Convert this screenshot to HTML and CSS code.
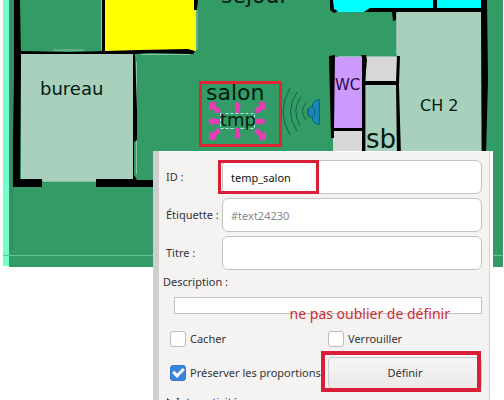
FILE: index.html
```html
<!DOCTYPE html>
<html lang="fr">
<head>
<meta charset="utf-8">
<title>Propriétés de l'objet</title>
<link rel="stylesheet" href="styles.css">
</head>
<body>
<main class="page">
  <svg class="plan" viewBox="0 0 504 267" role="img" aria-label="Plan">
    <rect x="3" width="7" height="266" fill="#73ffc8"/>
    <rect x="9" width="494" height="267" fill="#339b66"/>
    <path d="M3 255.500H503" stroke="#62c893"/>
    <rect x="10" width="4" height="250" fill="#3a8b65"/>
    <!-- rooms -->
    <rect x="105" width="91" height="51" fill="#ff0"/>
    <rect x="21" y="54" width="113" height="127" fill="#a9d0bd"/>
    <path d="M397 12H481V160H366V85H397z" fill="#a9d0bd"/>
    <path d="M333 0H481V9H370L364 12H337L333 9z" fill="#00ffff"/>
    <rect x="333" y="57" width="30" height="71" fill="#cc99ff"/>
    <rect x="366" y="57" width="31" height="25" fill="#d7d7d7"/>
    <rect x="333" y="131" width="30" height="25" fill="#d7d7d7"/>
    <path d="M101.500 0V50M53 50H84M141 54.500H190M136.500 62V174M197 8V50M396.500 13V55M338 56.500H396M43 181.500H96M482.500 12V150" stroke="#8fbfa6" fill="none"/>
    <!-- walls -->
    <path d="M14 0H20L21 60L20 179H42V187H13V135L14 80z"/>
    <path d="M20 51L70 52L140 50L188 49L195 51L193 54L150 53L135 54L137 110V140L134 142V175L137 180H153V187H96V179H133V54L20 54z"/>
    <path d="M102 0H105V51H102zM194 0H198L197 10H194z"/>
    <path d="M330 0H333L334 9L338 11L334 13L330 10zM364 12L370 8H433V0H437V8H481V0H487L488 80L486 155H482L481 12H396V20L393 21L392 12z"/>
    <path d="M329 56L335 55L334 128H362V57L361 55H366L367 60L365 81H396L397 56H400L399 85L401 156H397L396 85H365V156H362V131H334V138H331z"/>
    <g class="plan-text">
      <text class="size-l" x="221" y="3">séjour</text>
      <text class="size-m" x="40" y="95">bureau</text>
      <text class="size-l" x="206" y="100">salon</text>
      <text class="size-s wc" x="335" y="90">WC</text>
      <text class="size-s" x="420" y="111">CH 2</text>
      <text class="size-xl" x="366" y="148">sb</text>
    </g>
    <!-- temperature marker with its selection handles -->
    <rect x="220.500" y="113.500" width="34" height="15" fill="none" stroke="#b5e8ef" stroke-dasharray="3 2"/>
    <text class="plan-text size-m" x="220" y="126">tmp</text>
    <g fill="#e43eb2">
      <path d="M209 102L217 102L215 105L221 110L218 114L212 109L209 111z"/>
      <path d="M266 102L258 102L260 105L254 110L257 114L263 109L266 111z"/>
      <path d="M209 140L217 140L215 137L221 132L218 128L212 133L209 131z"/>
      <path d="M266 140L258 140L260 137L254 132L257 128L263 133L266 131z"/>
      <path d="M237 101L241 106L239.500 107V113H235.500V107L234 106zM237 140L241 135L239.500 134V128H235.500V134L234 135zM208 121L213 117V119H219V124H213V126zM266 121L261 117V119H255V124H261V126z"/>
    </g>
    <rect x="200.500" y="82.500" width="80" height="63" fill="none" stroke="#df2633" stroke-width="3"/>
    <!-- motion sensor -->
    <path d="M290 88Q276 112 290 135M297 92Q284 112 297 131M301 97Q291 109 300 126M306 103Q299 111 306 120" fill="none" stroke="#126441"/>
    <g fill="#1887b5" stroke="#145b82">
      <path d="M319.500 99.500V124.500Q313 124 312 118V107Q313 100 319.500 99.500z"/>
      <ellipse cx="311.500" cy="112" rx="3.500" ry="5"/>
      <path d="M308 108V117"/>
    </g>
  </svg>

  <form class="panel">
    <div class="fields">
      <label for="id">ID :</label>
      <div class="marked marked-id"><input class="field" id="id" type="text" value="temp_salon"></div>
      <label for="tag">Étiquette :</label>
      <input class="field" id="tag" type="text" placeholder="#text24230">
      <label for="title">Titre :</label>
      <input class="field" id="title" type="text">
    </div>
    <label class="desc-label" for="desc">Description :</label>
    <div class="desc-wrap">
      <textarea class="desc" id="desc" rows="1"></textarea>
      <p class="note">ne pas oublier de définir</p>
    </div>
    <div class="options">
      <label class="check"><input type="checkbox">Cacher</label>
      <label class="check"><input type="checkbox">Verrouiller</label>
      <label class="check"><input type="checkbox" checked>Préserver les proportions</label>
      <div class="marked marked-set"><button class="set" type="button">Définir</button></div>
    </div>
    <details class="more"><summary>Interactivité</summary></details>
  </form>
</main>
</body>
</html>
```
FILE: styles.css
```css
*,
*::before,
*::after {
  box-sizing: border-box;
}

body {
  margin: 0;
  background: #fff;
  color: #333338;
  font: 11px/16px "Noto Sans", "Open Sans", sans-serif;
}

.page {
  display: grid;
  align-items: start;
  height: 100vh;
  overflow: hidden;
}

.plan,
.panel {
  grid-area: 1 / 1;
}

.plan {
  display: block;
  width: 100%;
}

.plan-text {
  fill: #031b10;
  font-family: "DejaVu Sans", sans-serif;
}

.size-s { font-size: 16px; }
.size-m { font-size: 18px; }
.size-l { font-size: 22px; }
.size-xl { font-size: 26px; }
.plan-text .wc { fill: #2a0a4a; font-size: 15px; }

.panel {
  position: relative;
  margin: 151px 11px 0 153px;
  padding: 9px 8px 0 4px;
  border-left: 6px solid #d2cdcd;
  border-right: 3px solid #fff;
  background: #f5f3f2;
  box-shadow: inset -1px 0 #d8d2d1, inset 0 1px #fff;
}

.fields {
  display: grid;
  grid-template-columns: 56px 1fr;
  align-items: center;
  gap: 4px 3px;
}

.fields label {
  padding-left: 3px;
  white-space: nowrap;
}

.field {
  display: block;
  width: 100%;
  height: 34px;
  padding: 0 8px;
  border: 1px solid #c3c4bf;
  border-radius: 6px;
  background: #fff;
  color: #111;
  font: inherit;
}

.field::placeholder {
  color: #868686;
  opacity: 1;
}

.marked {
  position: relative;
}

.marked::after {
  position: absolute;
  border: 3px solid #d81f35;
  content: "";
  pointer-events: none;
}

.marked-id::after {
  inset: 0 auto 0 -4px;
  width: 101px;
}

.desc-label {
  display: block;
  margin-top: 4px;
}

.desc-wrap {
  position: relative;
  margin: 7px 0 0 11px;
}

.desc {
  display: block;
  width: 100%;
  height: 17px;
  padding: 0;
  border: 1px solid #c3c4bf;
  background: #fff;
  resize: none;
}

.note {
  position: absolute;
  top: 7px;
  right: 32px;
  margin: 0;
  color: #cf2d35;
  font-size: 14px;
  line-height: 20px;
  white-space: nowrap;
}

.options {
  display: grid;
  grid-template-columns: 151px 1fr;
  align-items: center;
  gap: 10px 7px;
  margin-top: 17px;
  padding-left: 7px;
}

.check {
  display: flex;
  align-items: center;
  gap: 4px;
  white-space: nowrap;
}

.check input {
  flex: none;
  width: 16px;
  height: 16px;
  margin: 0;
  border: 1px solid #bfbdb7;
  border-radius: 3px;
  background: #fff;
  appearance: none;
}

.check input:checked {
  display: grid;
  place-items: center;
  border-color: #3478d0;
  background: #3b84dd;
}

.check input:checked::before {
  width: 11px;
  height: 7px;
  margin-bottom: 3px;
  border: solid #fff;
  border-width: 0 0 3px 3px;
  content: "";
  transform: rotate(-45deg);
}

.set {
  display: block;
  width: 100%;
  height: 32px;
  border: 1px solid #cccac6;
  border-radius: 4px;
  background: linear-gradient(#f7f6f5, #ebe9e8);
  color: inherit;
  font: inherit;
}

.marked-set::after {
  border-width: 4px;
  inset: -6px 1px -3px -7px;
}

.more {
  margin-top: 5px;
  padding-left: 4px;
}

.more summary {
  list-style: none;
}

.more summary::before {
  display: inline-block;
  margin-right: 4px;
  border: solid transparent;
  border-width: 4px 0 4px 5px;
  border-left-color: #333;
  content: "";
}
```
